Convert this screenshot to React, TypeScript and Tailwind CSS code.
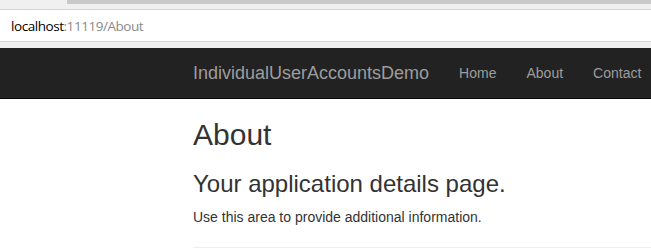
import React from 'react';

const navLinks = ['Home', 'About', 'Contact'];

export default function App() {
  return (
    <div className="w-[651px] h-[249px] overflow-hidden bg-white">
      {/* browser chrome */}
      <div className="h-[9px] bg-[#f0f0f0] flex">
        <div className="w-[67px]" />
        <div className="flex-1 h-[4px] bg-[#c9c9c9]" />
      </div>
      <div className="h-[33px] bg-white border-y border-[#d4d4d4] flex items-center pl-[11px] pt-[2px] text-[13.5px] font-['Open_Sans',sans-serif] tracking-[-0.45px]">
        <span className="text-black">localhost</span>
        <span className="text-[#8a8a8a]">:11119/About</span>
      </div>
      <div className="h-[6px] bg-[#f0f0f0]" />

      {/* navbar */}
      <div className="h-[51px] bg-[#222222] border-b border-[#080808] flex items-center pl-[178px] font-['Liberation_Sans',Arial,sans-serif]">
        <span className="px-[15px] text-[18px] leading-[20px] text-[#9d9d9d]">IndividualUserAccountsDemo</span>
        {navLinks.map((l) => (
          <span key={l} className="px-[15px] text-[14px] leading-[20px] text-[#9d9d9d]">
            {l}
          </span>
        ))}
      </div>

      {/* body */}
      <div className="pl-[193px] text-[#333333] font-['Liberation_Sans',Arial,sans-serif]">
        <h2 className="mt-[19px] text-[30px] leading-[33px] font-normal">About</h2>
        <h3 className="mt-[20px] text-[24px] leading-[26px] font-normal">Your application details page.</h3>
        <p className="mt-[10px] text-[14px] leading-[20px]">Use this area to provide additional information.</p>
        <hr className="mt-[20px] border-t border-[#eeeeee]" />
      </div>
    </div>
  );
}
